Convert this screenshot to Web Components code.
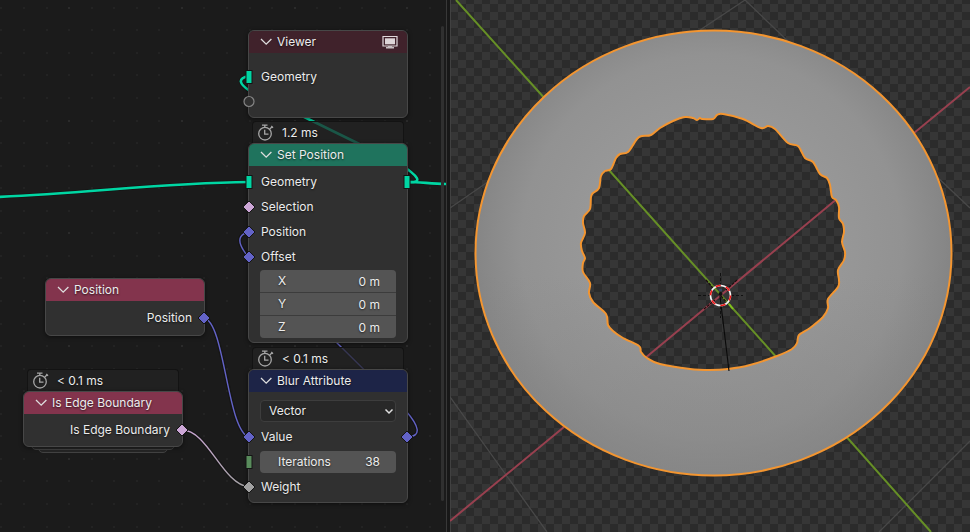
<!DOCTYPE html>
<html lang="en">
<head>
<meta charset="utf-8">
<meta name="viewport" content="width=device-width, initial-scale=1">
<title>Geometry Nodes</title>
<style>
  html, body { margin: 0; height: 100%; background: #181818; overflow: hidden; }
  body { font-family: Inter, "Liberation Sans", sans-serif; font-size: 12px; line-height: 16px; color: #ececec; }
</style>
</head>
<body>
<split-workspace>
  <node-editor slot="left">
    <geo-node label="Viewer" tone="#40222b" preview style="left:248px;top:30px;--top:11px">
      <node-row in="geometry">Geometry</node-row>
      <node-row in="virtual"></node-row>
    </geo-node>
    <geo-node label="Set Position" tone="#1f735d" time="1.2 ms" style="left:248px;top:143px;--top:3px;--bottom:4px">
      <node-row in="geometry" out="geometry">Geometry</node-row>
      <node-row in="boolean">Selection</node-row>
      <node-row in="vector">Position</node-row>
      <node-row in="vector">Offset</node-row>
      <field-stack>
        <number-field label="X" value="0 m"></number-field>
        <number-field label="Y" value="0 m"></number-field>
        <number-field label="Z" value="0 m"></number-field>
      </field-stack>
    </geo-node>
    <geo-node label="Blur Attribute" tone="#1d2447" time="&lt; 0.1 ms" style="left:248px;top:369px;--top:5px">
      <node-row tall><type-select></type-select></node-row>
      <node-row in="vector" out="vector">Value</node-row>
      <node-row in="integer"><field-stack inline><number-field label="Iterations" value="38"></number-field></field-stack></node-row>
      <node-row in="float">Weight</node-row>
    </geo-node>
    <geo-node label="Position" tone="#83344d" style="left:45px;top:278px;--top:4px;--bottom:5px">
      <node-row out="vector" end>Position</node-row>
    </geo-node>
    <geo-node label="Is Edge Boundary" tone="#83344d" time="&lt; 0.1 ms" stacked style="left:23px;top:391px;--top:3px;--bottom:4px">
      <node-row out="boolean" end>Is Edge Boundary</node-row>
    </geo-node>
  </node-editor>
  <model-viewport slot="right"></model-viewport>
</split-workspace>

<script>
const define = (name, html, setup) => {
  customElements.define(name, class extends HTMLElement {
    constructor() {
      super();
      this.attachShadow({ mode: 'open' });
    }
    connectedCallback() {
      if (this.shadowRoot.childNodes.length) return;
      this.shadowRoot.innerHTML = typeof html === 'function' ? html(this) : html;
      if (setup) setup(this, this.shadowRoot);
    }
  });
};
const esc = s => s.replace(/&/g, '&amp;').replace(/</g, '&lt;');

define('split-workspace', `
  <style>
    :host { display: grid; grid-template-columns: 224fr 261fr; height: 100vh; }
  </style>
  <slot name="left"></slot><slot name="right"></slot>`);

define('node-editor', `
  <style>
    :host { display: block; position: relative; overflow: hidden; background: #1b1b1b; border-right: 1px solid #383838; margin-right: 1px; }
    svg { position: absolute; left: 0; top: 0; width: 100%; height: 100%; overflow: visible; }
    .bar { position: absolute; right: 2px; top: 26px; bottom: 31px; width: 3px; border-radius: 2px; background: #303030; }
  </style>
  <svg fill="none" aria-hidden="true">
    <defs>
      <linearGradient id="fade" gradientUnits="userSpaceOnUse" x1="182" y1="430" x2="249" y2="487">
        <stop offset="0" stop-color="#cca6d6"/><stop offset="1" stop-color="#a1a1a1"/>
      </linearGradient>
    </defs>
    <g id="grid"></g>
    <g id="shade" stroke="#101010"></g>
    <g id="links">
      <g stroke="#00d6a3" stroke-width="2.6">
        <path d="M-4 197C90 193 160 183 249 182"/>
        <path d="M408 182C420 182 434 184 450 184"/>
        <path d="M408 182C424 183 418 176 400 164L290 110C262 99 224 81 249 76"/>
      </g>
      <g stroke="#6363c7" stroke-width="1.4">
        <path d="M408 437C422 436 419 426 406 411L334 340L262 272C240 250 232 236 249 232"/>
        <path d="M204 318C225 322 227 431 249 437"/>
      </g>
      <path stroke="url(#fade)" stroke-width="1.4" d="M182 430C208 430 222 484 249 487"/>
    </g>
  </svg>
  <slot></slot>
  <div class="bar"></div>`,
  (host, root) => {
    let dots = '';
    const pitch = 203 / 9;
    for (let i = -1; i < 19; i++) for (let j = -13; j < 11; j++) {
      const major = (i + 3) % 5 === 0 && (j + 13) % 5 === 0;
      const x = Math.round(24 + i * pitch), y = Math.round(301 + j * pitch);
      dots += `<rect x="${x - 1}" y="${y - 1}" width="2" height="2" fill="${major ? '#2b2b2b' : '#232323'}"/>`;
    }
    root.getElementById('grid').innerHTML = dots;
    root.getElementById('shade').innerHTML = [...root.querySelectorAll('#links path')]
      .map(p => `<path stroke-width="4" opacity=".5" d="${p.getAttribute('d')}"/>`).join('');
  });

define('geo-node', host => `
  <style>
    :host { position: absolute; display: block; width: 160px; }
    .node { position: relative; border: 1px solid #474747; border-radius: 6px; background: #303030; box-shadow: 0 1px 4px #0008; }
    header { display: flex; align-items: center; box-sizing: border-box; height: 22px; padding: 0 9px 0 10px; gap: 4px; border-radius: 5px 5px 0 0;
      background: ${host.getAttribute('tone')}; text-shadow: 0 1px 2px #000a; }
    header span { flex: 1; white-space: nowrap; }
    button { appearance: none; display: flex; margin: 0; padding: 0; border: 0; background: none; }
    .body { padding: var(--top) 0 var(--bottom, 3px); }
    .time { position: absolute; left: 4px; right: 4px; bottom: 100%; height: 21px; display: flex; align-items: center; gap: 8px;
      padding-left: 4px; border: 1px solid #131313; border-bottom: 0; border-radius: 4px 4px 0 0; background: #242424b8; text-shadow: 0 1px 2px #000a; }
    .leaf { position: absolute; height: 8px; box-sizing: border-box; border: 1px solid #424242; border-radius: 0 0 5px 5px; background: #262626; }
    .a { left: 8px; right: 8px; bottom: -3px; } .b { left: 15px; right: 15px; bottom: -6px; }
  </style>
  ${host.hasAttribute('time') ? `<div class="time">
    <svg width="17" height="17" viewBox="0 0 17 17" fill="none" stroke="#a6a6a6" stroke-width="1.3" aria-hidden="true">
      <circle cx="8" cy="9.7" r="6.3"/><path d="M5 1.2H10.5M7.8 1.2V3.6M12.8 5L15.4 2.6M14.3 2L16 3.8M7.7 5.8V10.1H11.5"/></svg>
    <span>${esc(host.getAttribute('time'))}</span></div>` : ''}
  ${host.hasAttribute('stacked') ? '<div class="leaf b"></div><div class="leaf a"></div>' : ''}
  <div class="node">
    <header>
      <button type="button" aria-label="Collapse">
        <svg width="14" height="14" viewBox="0 0 14 14" fill="none" stroke="#dedede" stroke-width="1.3"><path d="M2 4L7.2 9.2L12.4 4"/></svg>
      </button>
      <span>${host.getAttribute('label')}</span>
      ${host.hasAttribute('preview') ? `<button type="button" aria-label="Preview">
        <svg width="16" height="14" viewBox="0 0 16 14"><path d="M1 1.5H15V11H1Z" fill="none" stroke="#e0d8da" stroke-width="1.2"/><path d="M3 3.3H13V9.3H3Z" fill="#ddd5d7"/><path d="M6 11H10V12H12V13.4H4V12H6Z" fill="#c8bfc2"/></svg>
      </button>` : ''}
    </header>
    <div class="body"><slot></slot></div>
  </div>`);

const colours = { geometry: '#00d6a3', boolean: '#cca6d6', vector: '#6363c7', integer: '#598c5c', float: '#a1a1a1', virtual: '#303030' };
const socket = (type, side) => {
  if (!type) return '';
  const c = colours[type];
  const shape = type === 'virtual' ? `<circle cx="8" cy="7.5" r="5" fill="${c}" stroke="#858585" stroke-width="1.2"/>`
    : type === 'geometry' || type === 'integer' ? `<rect x="5" y="1.5" width="6" height="13" fill="${c}" stroke="#141414"/>`
    : `<path d="M8 2L14 8L8 14L2 8Z" fill="${c}" stroke="#141414"/>`;
  return `<svg class="${side}" width="16" height="16" aria-hidden="true">${shape}</svg>`;
};
define('node-row', host => `
  <style>
    :host { position: relative; display: flex; align-items: center; height: 25px; padding: 0 12px; text-shadow: 0 1px 2px #000a; white-space: nowrap; }
    :host([tall]) { height: 27px; }
    :host([end]) { justify-content: flex-end; }
    svg { position: absolute; top: 5px; } .in { left: -8px; } .out { right: -8px; }
    ::slotted(*) { flex: 1; }
  </style>
  ${socket(host.getAttribute('in'), 'in')}<slot></slot>${socket(host.getAttribute('out'), 'out')}`);

define('field-stack', `
  <style>
    :host { display: grid; gap: 1px; margin: 1px 11px 0; border-radius: 4px; overflow: hidden; background: #3c3c3c; }
    :host([inline]) { margin: 0 -1px; }
  </style><slot></slot>`);

define('number-field', host => `
  <style>
    :host { display: flex; align-items: center; height: 22px; padding: 0 16px 0 18px; background: #545454; text-shadow: 0 1px 2px #0009; }
    input { appearance: none; flex: 1; width: 40px; min-width: 0; height: 18px; margin: 0; padding: 0; border: 0; outline: 0; background: transparent;
      text-align: right; font: inherit; color: inherit; text-shadow: inherit; }
  </style>
  <label for="v">${host.getAttribute('label')}</label><input id="v" type="text" value="${host.getAttribute('value')}">`);

define('type-select', `
  <style>
    :host { position: relative; display: block; margin: 0 -1px; }
    select { appearance: none; display: block; box-sizing: border-box; width: 100%; height: 22px; padding: 0 8px; border: 1px solid #3d3d3d; border-radius: 4px;
      background: #282828; color: inherit; font: inherit; text-shadow: 0 1px 2px #000a; }
    svg { position: absolute; right: 2px; top: 6px; pointer-events: none; }
  </style>
  <select aria-label="Data type"><option>Float</option><option>Integer</option><option selected>Vector</option><option>Color</option></select>
  <svg width="10" height="10" viewBox="0 0 10 10" fill="none" stroke="#e0e0e0" stroke-width="1.5" aria-hidden="true"><path d="M1.5 3.5L5 7L8.5 3.5"/></svg>`);

/* Closed Catmull-Rom curve through a list of x,y pairs. */
const curve = text => {
  const p = text.trim().split(/\s+/).map(s => s.split(',').map(Number)), n = p.length;
  let d = `M${p[0]}`;
  for (let i = 0; i < n; i++) {
    const a = p[(i + n - 1) % n], b = p[i], c = p[(i + 1) % n], e = p[(i + 2) % n];
    d += `C${b[0] + (c[0] - a[0]) / 6},${b[1] + (c[1] - a[1]) / 6} ${c[0] - (e[0] - b[0]) / 6},${c[1] - (e[1] - b[1]) / 6} ${c}`;
  }
  return d + 'Z';
};
const rim = 'M475.5 253A238 222.5 0 0 1 951.5 253A238 222.5 0 0 1 475.5 253Z';
const hole = curve(`717,115 713,119 702,119 700,118 697,120 693,118 685,117 673,121 660,128 651,135 642,136 637,139 628,152 620,154 616,158 611,169
  605,171 601,176 599,188 593,193 591,197 590,209 584,216 583,223 585,233 581,243 582,251 585,258 583,263 583,272 590,283 589,293 593,302 606,314 608,325 613,331
  623,338 639,346 641,352 647,358 660,364 690,369 710,370 728,369 750,365 777,356 792,349 797,343 799,335 810,328 823,317 828,308
  828,299 838,287 839,280 838,270 844,260 845,252 842,242 844,232 843,224 839,218 839,207 836,200 832,197 830,185 827,178 820,174 813,162 805,158
  798,146 788,143 775,129 768,126 761,128 743,119 723,114`);

define('model-viewport', `
  <style>
    :host { display: block; overflow: hidden; margin-left: 2px; box-sizing: border-box;
      background: repeating-conic-gradient(#2b2b2b 0 25%, #363636 0 50%) 0 100% / 16px 16px; box-shadow: inset 1px 0 #414141; }
    svg { display: block; width: 100%; height: 100%; }
  </style>
  <svg viewBox="450 0 520 532" preserveAspectRatio="xMidYMid slice" fill="none" role="img" aria-label="Ring mesh in the 3D viewport">
    <defs>
      <radialGradient id="g" gradientUnits="userSpaceOnUse" cx="712" cy="245" r="238">
        <stop offset=".5" stop-color="#989898"/><stop offset=".8" stop-color="#929292"/><stop offset="1" stop-color="#858585"/>
      </radialGradient>
      <linearGradient id="low" x1="0" y1="0" x2="0" y2="1"><stop offset=".55" stop-color="#868686" stop-opacity="0"/><stop offset="1" stop-color="#868686" stop-opacity=".6"/></linearGradient>
    </defs>
    <path stroke="#484848" stroke-width="1.3" d="M450 208L495 177M700 30L745 0L792 45M935 175L970 208M450 397L547 532M879 532L970 441"/>
    <path stroke="#668f26" stroke-width="2" d="M456 0L547 101M608 169L778 359M844 434L931 532"/>
    <path stroke="#98404f" stroke-width="2" d="M450 521L564 427M644 359L838 198M914 133L970 87"/>
    <path fill="url(#g)" fill-rule="evenodd" d="${rim}${hole}"/>
    <path fill="url(#low)" fill-rule="evenodd" d="${rim}${hole}"/>
    <path stroke="#f39530" stroke-width="2" stroke-linejoin="round" d="${rim}${hole}"/>
    <path stroke="#0a0a0a" stroke-width="1.1" d="M720 296L729 371"/>
    <path stroke="#111" stroke-dasharray="3 2" d="M698 295.5H710M731 295.5H743M720.5 273V285M720.5 306V318"/>
    <path stroke="#1a0d0d" stroke-width="1.2" stroke-dasharray="3 1" d="M704 309L715 300M726 290L737 280M706 280L713 288M721 296L728 304"/>
    <path stroke="#82c01d" stroke-width="2" d="M729 304L733 309"/>
    <circle cx="720.5" cy="295.5" r="10" stroke="#f4f4f4" stroke-width="1.6"/>
    <circle cx="720.5" cy="295.5" r="10" stroke="#f01818" stroke-width="1.6" stroke-dasharray="5.236"/>
    <circle cx="720.5" cy="294" r="2" fill="#111"/>
    <path stroke="#285a96" d="M719 290H722"/>
  </svg>`);
</script>
</body>
</html>
